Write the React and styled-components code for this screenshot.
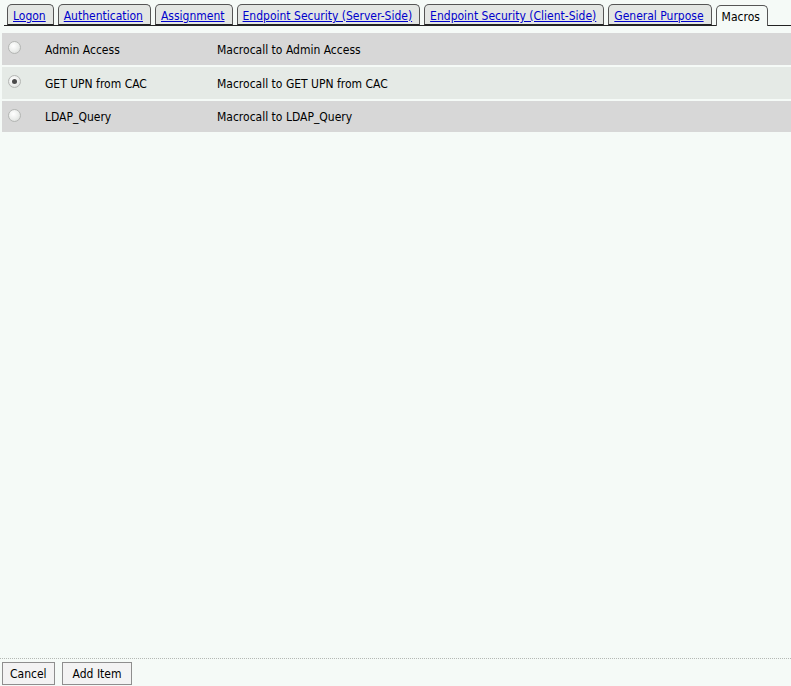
import React from "react";
import styled, { createGlobalStyle } from "styled-components";

const FONT = `"DejaVu Sans Condensed", "DejaVu Sans", Verdana, sans-serif`;

const Global = createGlobalStyle`
  html, body { margin: 0; padding: 0; }
  body {
    background: #f5faf7;
    font-family: ${FONT};
    font-stretch: condensed;
    font-size: 12px;
    color: #000;
  }
`;

const Page = styled.div`
  height: 686px;
  display: flex;
  flex-direction: column;
  overflow: hidden;
`;

const TabBar = styled.div`
  display: flex;
  align-items: flex-end;
  gap: 4px;
  margin: 4px 0 0 4px;
  padding-left: 3px;
  border-bottom: 1px solid #222;
  height: 21px;
`;

const Tab = styled.div`
  height: 21px;
  box-sizing: border-box;
  padding: 0 7px 0 5px;
  display: flex;
  align-items: center;
  border: 1px solid #555;
  border-bottom: ${p => (p.$active ? "none" : "1px solid #222")};
  border-radius: 5px 5px 0 0;
  background: ${p => (p.$active ? "#f5faf7" : "#e3e6e3")};
  margin-bottom: ${p => (p.$active ? "-1px" : "0")};
  padding-top: ${p => (p.$active ? "1px" : "3px")};
  white-space: nowrap;
  a {
    color: #0000cc;
    text-decoration: underline;
  }
`;

const List = styled.div`
  display: flex;
  flex-direction: column;
  gap: 2px;
  margin: 7px 0 0 2px;
`;

const Row = styled.div`
  height: ${p => p.$h}px;
  display: grid;
  grid-template-columns: 43px 172px 1fr;
  align-items: center;
  background: ${p => (p.$alt ? "#e5eae6" : "#d7d7d7")};
`;

const Radio = styled.span`
  width: 13px;
  height: 13px;
  margin-left: 6px;
  margin-top: -3px;
  box-sizing: border-box;
  border-radius: 50%;
  border: 1px solid #b4b6b4;
  background: radial-gradient(circle at 40% 35%, #ffffff 0%, #ebedeb 55%, #d2d4d2 100%);
  display: flex;
  align-items: center;
  justify-content: center;
  &::after {
    content: "";
    width: 5px;
    height: 5px;
    border-radius: 50%;
    background: ${p => (p.$checked ? "#4a4a4a" : "transparent")};
  }
`;

const Cell = styled.span`
  white-space: nowrap;
  padding-top: 1px;
`;

const Spacer = styled.div`
  flex: 1;
`;

const Footer = styled.div`
  border-top: 1px dotted #b4b8b4;
  padding: 3px 2px 1px 2px;
  display: flex;
  gap: 7px;
`;

const Button = styled.button`
  font-family: ${FONT};
  font-stretch: condensed;
  font-size: 12px;
  height: 23px;
  padding: 0 ${p => (p.$wide ? "10px" : "7px")};
  background: #f3f3f3;
  border: 1px solid #8e8e8e;
  border-radius: 0;
  color: #000;
`;

const tabs = [
  "Logon",
  "Authentication",
  "Assignment",
  "Endpoint Security (Server-Side)",
  "Endpoint Security (Client-Side)",
  "General Purpose",
];

const rows = [
  { name: "Admin Access", desc: "Macrocall to Admin Access", checked: false, h: 32 },
  { name: "GET UPN from CAC", desc: "Macrocall to GET UPN from CAC", checked: true, h: 32 },
  { name: "LDAP_Query", desc: "Macrocall to LDAP_Query", checked: false, h: 31 },
];

export default function App() {
  return (
    <Page>
      <Global />
      <TabBar>
        {tabs.map(t => (
          <Tab key={t}>
            <a href="#">{t}</a>
          </Tab>
        ))}
        <Tab $active>Macros</Tab>
      </TabBar>
      <List>
        {rows.map((r, i) => (
          <Row key={r.name} $alt={i === 1} $h={r.h}>
            <Radio $checked={r.checked} />
            <Cell>{r.name}</Cell>
            <Cell>{r.desc}</Cell>
          </Row>
        ))}
      </List>
      <Spacer />
      <Footer>
        <Button>Cancel</Button>
        <Button $wide>Add Item</Button>
      </Footer>
    </Page>
  );
}
